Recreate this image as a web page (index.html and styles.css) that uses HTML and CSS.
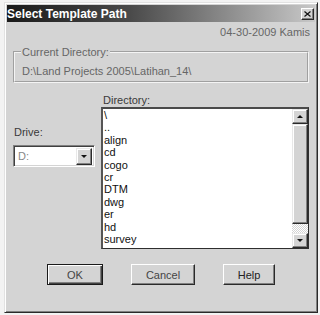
FILE: index.html
```html
<!DOCTYPE html>
<html lang="en">
<head>
    <meta charset="UTF-8">
    <title>Select Template Path</title>
    <link rel="stylesheet" href="styles.css">
</head>
<body>
    <div class="dialog">
        <div class="titlebar">
            <span class="title">Select Template Path</span>
            <button class="close-btn">
                <svg width="7" height="6" viewBox="0 0 7 6"><path d="M0.5 0.5 L6.5 5.5 M6.5 0.5 L0.5 5.5" stroke="#111" stroke-width="1.2" fill="none"/></svg>
            </button>
        </div>

        <div class="date">04-30-2009 Kamis</div>

        <fieldset class="group">
            <legend>Current Directory:</legend>
            <div class="cur-dir">D:\Land Projects 2005\Latihan_14\</div>
        </fieldset>

        <div class="main">
            <div class="drive-col">
                <div class="label">Drive:</div>
                <div class="combo">
                    <span class="combo-text">D:</span>
                    <span class="combo-btn"><span class="arrow-down"></span></span>
                </div>
            </div>
            <div class="dir-col">
                <div class="label dir-label">Directory:</div>
                <div class="listbox">
                    <ul class="items">
                        <li>\</li>
                        <li>..</li>
                        <li>align</li>
                        <li>cd</li>
                        <li>cogo</li>
                        <li>cr</li>
                        <li>DTM</li>
                        <li>dwg</li>
                        <li>er</li>
                        <li>hd</li>
                        <li>survey</li>
                    </ul>
                    <div class="scrollbar">
                        <span class="sb-btn"><span class="arrow-up"></span></span>
                        <span class="sb-thumb"></span>
                        <span class="sb-track"></span>
                        <span class="sb-btn"><span class="arrow-down"></span></span>
                    </div>
                </div>
            </div>
        </div>

        <div class="buttons">
            <button class="btn btn-default btn-ok">OK</button>
            <button class="btn btn-cancel">Cancel</button>
            <button class="btn btn-help">Help</button>
        </div>
    </div>
</body>
</html>
```

FILE: styles.css
```css
* {
    box-sizing: border-box;
}

body {
    margin: 0;
    background: #f3f3f3;
    font-family: "Liberation Sans", Arial, sans-serif;
    font-size: 11px;
    color: #333;
}

.dialog {
    margin: 2px 0 0 4px;
    width: 314px;
    height: 311px;
    background: #d4d4d4;
    border: 1px solid;
    border-color: #e2e2e2 #2a2a2a #2a2a2a #e2e2e2;
    box-shadow: inset 1px 1px 0 #fff, inset -1px -1px 0 #808080;
    padding: 2px;
    display: flex;
    flex-direction: column;
}

.titlebar {
    height: 17px;
    display: flex;
    align-items: center;
    justify-content: space-between;
    background: linear-gradient(to right, #1a1a1a 0%, #4a4a4a 40%, #c8c8c8 100%);
}

.title {
    color: #fff;
    font-weight: bold;
    font-size: 12px;
}

.close-btn {
    width: 13px;
    height: 12px;
    margin-right: 1px;
    padding: 0;
    display: flex;
    align-items: center;
    justify-content: center;
    background: #d4d4d4;
    border: 1px solid;
    border-color: #fff #2a2a2a #2a2a2a #fff;
    box-shadow: inset -1px -1px 0 #808080;
}

.date {
    margin-top: 4px;
    line-height: 13px;
    text-align: right;
    padding-right: 5px;
    color: #666;
}

.group {
    margin: 7px 6px 0 6px;
    padding: 7px 6px 3px 6px;
    border: 2px groove #f4f4f4;
    min-width: 0;
}

.group legend {
    padding: 0 1px;
    line-height: 12px;
    color: #666;
}

.cur-dir {
    line-height: 13px;
    padding-left: 1px;
    color: #666;
}

.main {
    display: flex;
    margin: 0 6px;
}

.drive-col {
    width: 82px;
    margin-top: 43px;
}

.label {
    line-height: 13px;
    padding-left: 1px;
    color: #3a3a3a;
}

.combo {
    margin-top: 6px;
    height: 22px;
    display: flex;
    align-items: center;
    background: #fff;
    border: 1px solid;
    border-color: #808080 #fff #fff #808080;
    box-shadow: inset 1px 1px 0 #404040, inset -1px -1px 0 #d4d4d4;
    padding: 1px 2px 1px 2px;
}

.combo-text {
    flex: 1;
    padding-left: 2px;
    color: #888;
}

.combo-btn {
    width: 16px;
    height: 17px;
    display: flex;
    align-items: center;
    justify-content: center;
    background: #d4d4d4;
    border: 1px solid;
    border-color: #e8e8e8 #2a2a2a #2a2a2a #e8e8e8;
    box-shadow: inset -1px -1px 0 #808080, inset 1px 1px 0 #fff;
}

.dir-col {
    width: 208px;
    margin-left: 6px;
    margin-top: 11px;
}

.dir-label {
    padding-left: 2px;
}

.listbox {
    height: 142px;
    display: flex;
    background: #fff;
    border: 1px solid #2e2e2e;
    border-top: 2px solid #4a4a4a;
    border-left: 2px solid #555;
}

.items {
    flex: 1;
    list-style: none;
    margin: 0;
    padding: 0;
}

.items li {
    line-height: 12.4px;
    padding-left: 1px;
    color: #111;
}

.scrollbar {
    width: 16px;
    display: flex;
    flex-direction: column;
}

.sb-btn,
.sb-thumb {
    display: flex;
    align-items: center;
    justify-content: center;
    background: #d4d4d4;
    border: 1px solid;
    border-color: #e8e8e8 #2a2a2a #2a2a2a #e8e8e8;
    box-shadow: inset -1px -1px 0 #808080, inset 1px 1px 0 #fff;
}

.sb-btn {
    height: 15px;
}

.sb-thumb {
    height: 100px;
}

.sb-track {
    flex: 1;
    background: repeating-conic-gradient(#fff 0 25%, #d4d4d4 0 50%) 0 0 / 2px 2px;
}

.arrow-up,
.arrow-down {
    width: 0;
    height: 0;
    border-left: 3px solid transparent;
    border-right: 3px solid transparent;
}

.arrow-up {
    border-bottom: 3px solid #111;
}

.arrow-down {
    border-top: 3px solid #111;
}

.buttons {
    display: flex;
    gap: 28px;
    margin-top: 15px;
    padding-left: 40px;
}

.btn {
    height: 21px;
    padding: 0;
    font-family: "Liberation Sans", Arial, sans-serif;
    font-size: 11px;
    color: #444;
    background: #d4d4d4;
    border: 1px solid;
    border-color: #fff #2a2a2a #2a2a2a #fff;
    box-shadow: inset -1px -1px 0 #808080;
}

.btn-default {
    border: 1px solid #1a1a1a;
    box-shadow: inset 1px 1px 0 #fff, inset -1px -1px 0 #404040, inset -2px -2px 0 #808080;
}

.btn-ok {
    width: 56px;
}

.btn-cancel {
    width: 64px;
}

.btn-help {
    width: 52px;
    color: #222;
}
```
